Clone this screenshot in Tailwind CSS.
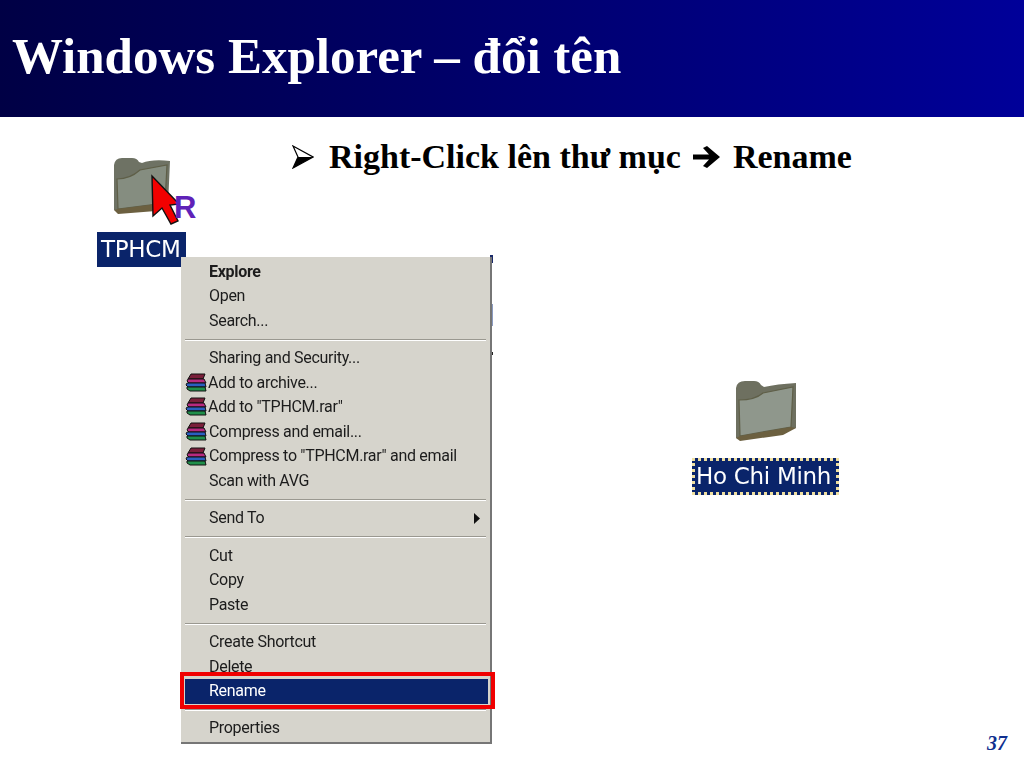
<!DOCTYPE html>
<html lang="vi">
<head>
<meta charset="utf-8">
<script src="https://cdn.jsdelivr.net/npm/@tailwindcss/browser@4"></script>
<title>Windows Explorer</title>
</head>
<body class="bg-white overflow-hidden">
<div class="relative w-[1024px] h-[768px] bg-white overflow-hidden flex flex-col">
  <header class="h-[117px] shrink-0 bg-gradient-to-r from-[#000045] to-[#000099] flex items-center pl-3 pb-[4px]">
    <h1 class="font-['Liberation_Serif',serif] font-bold text-white text-[51px] leading-none">Windows Explorer – đổi tên</h1>
  </header>
  <div class="flex items-center pl-[292px] pt-[20px] gap-[15px] font-['Liberation_Serif',serif] font-bold text-black text-[34px] leading-[40px]">
    <svg width="22" height="24" viewBox="0 0 22 24"><path d="M1 1 L21 12 L1 23 L6 12 Z" fill="#fff" stroke="#000" stroke-width="1.2"/><path d="M6 12 L21 12 L1 23 Z" fill="#000"/></svg>
    <span class="flex items-center gap-[11px]">Right-Click lên thư mục
      <svg width="30" height="24" viewBox="0 0 30 24"><path d="M1 9.5 H17 L11 3 L15 1 L28 12 L15 23 L11 21 L17 14.5 H1 Z" fill="#000"/></svg>
      Rename</span>
  </div>

  <!-- dragged folder -->
  <svg class="absolute left-[110px] top-[155px] blur-[0.6px]" width="62" height="62" viewBox="0 0 62 62">
    <path d="M4 10 Q5 3 12 3 H22 Q27 3 29 7 L32 8 Q42 4 60 6 L58 50 L20 54 Q8 56 4 55 Z" fill="#6e7264"/>
    <path d="M7 24 Q20 24 30 15 L57 10 L55 48 L8 54 Z" fill="#858d80" stroke="#5f5f48" stroke-width="1.2"/>
    <path d="M4 55 L8 59 L46 56 L58 50 L55 48 L8 54 Z" fill="#6c6040"/>
  </svg>
  <svg class="absolute left-[148px] top-[172px]" width="36" height="54" viewBox="0 0 36 54"><path d="M4 4 L31 32 L22 33 L30 49 L23 52 L14 36 L5 44 Z" fill="#f20000" stroke="#111" stroke-width="1.4"/></svg>
  <span class="absolute left-[174px] top-[190px] font-['Liberation_Sans',sans-serif] font-bold text-[31px] leading-[36px] text-[#5f22b8]">R</span>
  <div class="absolute left-[97px] top-[232px] w-[89px] h-[35px] bg-[#0a246a] text-white font-['DejaVu_Sans',sans-serif] text-[23px] leading-[34px] pl-[4px] tracking-[-0.3px] blur-[0.3px]">TPHCM</div>

  <!-- slivers of the window behind the menu -->
  <div class="absolute left-[490px] top-[255px] w-[3px] h-[8px] bg-[#1a2a6a]"></div>
  <div class="absolute left-[490px] top-[304px] w-[3px] h-[22px] bg-[#8a9ac0]"></div>
  <div class="absolute left-[490px] top-[352px] w-[3px] h-[3px] bg-[#222]"></div>

  <!-- context menu -->
  <div class="absolute left-[181px] top-[257px] w-[311px] h-[487px] bg-[#d6d4cc] border-r-2 border-b-2 border-[#767676] pt-[2.5px] px-[4px] font-['Roboto',sans-serif] text-[16px] tracking-[-0.3px] text-[#1c1c1c] blur-[0.3px]">
    <div class="h-[24.6px] leading-[24.6px] pl-[24px] font-bold">Explore</div>
    <div class="h-[24.6px] leading-[24.6px] pl-[24px]">Open</div>
    <div class="h-[24.6px] leading-[24.6px] pl-[24px]">Search...</div>
    <div class="h-[12.7px] flex items-center"><div class="w-full h-[2px] bg-[#9a9890] border-b border-white"></div></div>
    <div class="h-[24.6px] leading-[24.6px] pl-[24px]">Sharing and Security...</div>
    <div class="h-[24.6px] leading-[24.6px] flex items-center gap-[1px]">
      <svg width="22" height="20" viewBox="0 0 22 20"><path d="M6 1 H20 L18 6 H3 Z" fill="#7a1f3a" stroke="#111"/><path d="M3 6 H19 L21 10 H4 L2 8 Z" fill="#b82a80" stroke="#111"/><path d="M2 10 H20 L21 14 H3 L1 12 Z" fill="#2a5fc0" stroke="#111"/><path d="M2 14 H20 L21 18 H5 L2 16 Z" fill="#1f8f4a" stroke="#111"/></svg>
      <span>Add to archive...</span></div>
    <div class="h-[24.6px] leading-[24.6px] flex items-center gap-[1px]">
      <svg width="22" height="20" viewBox="0 0 22 20"><path d="M6 1 H20 L18 6 H3 Z" fill="#7a1f3a" stroke="#111"/><path d="M3 6 H19 L21 10 H4 L2 8 Z" fill="#b82a80" stroke="#111"/><path d="M2 10 H20 L21 14 H3 L1 12 Z" fill="#2a5fc0" stroke="#111"/><path d="M2 14 H20 L21 18 H5 L2 16 Z" fill="#1f8f4a" stroke="#111"/></svg>
      <span>Add to "TPHCM.rar"</span></div>
    <div class="h-[24.6px] leading-[24.6px] flex items-center gap-[2px]">
      <svg width="22" height="20" viewBox="0 0 22 20"><path d="M6 1 H20 L18 6 H3 Z" fill="#7a1f3a" stroke="#111"/><path d="M3 6 H19 L21 10 H4 L2 8 Z" fill="#b82a80" stroke="#111"/><path d="M2 10 H20 L21 14 H3 L1 12 Z" fill="#2a5fc0" stroke="#111"/><path d="M2 14 H20 L21 18 H5 L2 16 Z" fill="#1f8f4a" stroke="#111"/></svg>
      <span>Compress and email...</span></div>
    <div class="h-[24.6px] leading-[24.6px] flex items-center gap-[2px]">
      <svg width="22" height="20" viewBox="0 0 22 20"><path d="M6 1 H20 L18 6 H3 Z" fill="#7a1f3a" stroke="#111"/><path d="M3 6 H19 L21 10 H4 L2 8 Z" fill="#b82a80" stroke="#111"/><path d="M2 10 H20 L21 14 H3 L1 12 Z" fill="#2a5fc0" stroke="#111"/><path d="M2 14 H20 L21 18 H5 L2 16 Z" fill="#1f8f4a" stroke="#111"/></svg>
      <span>Compress to "TPHCM.rar" and email</span></div>
    <div class="h-[24.6px] leading-[24.6px] pl-[24px]">Scan with AVG</div>
    <div class="h-[12.7px] flex items-center"><div class="w-full h-[2px] bg-[#9a9890] border-b border-white"></div></div>
    <div class="h-[24.6px] leading-[24.6px] pl-[24px] pr-[6px] flex items-center justify-between">
      <span>Send To</span>
      <svg width="7" height="11" viewBox="0 0 7 11"><path d="M1 0 L7 5.500 L1 11 Z" fill="#111"/></svg>
    </div>
    <div class="h-[12.7px] flex items-center"><div class="w-full h-[2px] bg-[#9a9890] border-b border-white"></div></div>
    <div class="h-[24.6px] leading-[24.6px] pl-[24px]">Cut</div>
    <div class="h-[24.6px] leading-[24.6px] pl-[24px]">Copy</div>
    <div class="h-[24.6px] leading-[24.6px] pl-[24px]">Paste</div>
    <div class="h-[12.7px] flex items-center"><div class="w-full h-[2px] bg-[#9a9890] border-b border-white"></div></div>
    <div class="h-[24.6px] leading-[24.6px] pl-[24px]">Create Shortcut</div>
    <div class="h-[24.6px] leading-[24.6px] pl-[24px]">Delete</div>
    <div class="h-[24.6px] leading-[24.6px] pl-[24px] -mr-[2px] bg-[#0a246a] text-white">Rename</div>
    <div class="h-[12.7px] flex items-center"><div class="w-full h-[2px] bg-[#9a9890] border-b border-white"></div></div>
    <div class="h-[24.6px] leading-[24.6px] pl-[24px]">Properties</div>
  </div>
  <div class="absolute left-[180px] top-[672px] w-[315px] h-[37px] border-[4px] border-[#f00000]"></div>

  <!-- renamed folder -->
  <svg class="absolute left-[733px] top-[378px] blur-[0.6px]" width="66" height="66" viewBox="0 0 66 66">
    <path d="M3 10 Q4 3 12 3 H21 Q26 3 28 7 L31 9 Q44 6 63 5 L63 50 L20 60 Q8 62 3 60 Z" fill="#6e7060"/>
    <path d="M6 22 Q22 22 30 15 L60 9 L58 49 L7 58 Z" fill="#8f978c" stroke="#5f5f48" stroke-width="1.2"/>
    <path d="M3 60 L7 63 L50 57 L63 50 L58 49 L7 58 Z" fill="#6c6040"/>
  </svg>
  <div class="absolute left-[692px] top-[458px] w-[147px] h-[37px] bg-[#0a246a] border-[3px] border-dotted border-[#f0e0a0] text-white font-['DejaVu_Sans',sans-serif] text-[23px] leading-[31px] pl-[1px] tracking-[-0.3px] whitespace-nowrap blur-[0.3px]">Ho Chi Minh</div>

  <div class="absolute right-[17px] top-[731px] font-['Liberation_Serif',serif] font-bold italic text-[20px] leading-[24px] text-[#0f2f8f]">37</div>
</div>
</body>
</html>
